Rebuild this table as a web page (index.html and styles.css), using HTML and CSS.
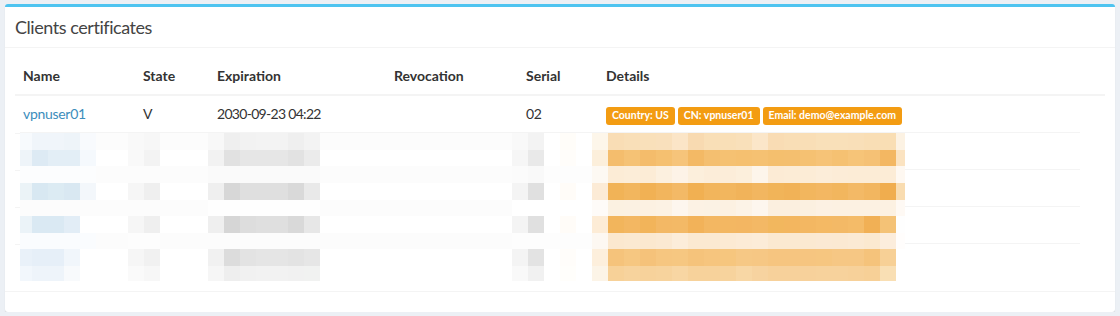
FILE: index.html
```html
<!DOCTYPE html>
<html lang="en">
<head>
<meta charset="utf-8">
<title>Clients certificates</title>
<link rel="stylesheet" href="styles.css">
</head>
<body>
<div class="box">
  <div class="box-header">
    <h3 class="box-title">Clients certificates</h3>
  </div>
  <div class="box-body">
    <div class="table-wrap">
      <table class="table">
        <thead>
          <tr>
            <th class="col-name">Name</th>
            <th class="col-state">State</th>
            <th class="col-exp">Expiration</th>
            <th class="col-rev">Revocation</th>
            <th class="col-serial">Serial</th>
            <th class="col-details">Details</th>
          </tr>
        </thead>
        <tbody>
          <tr>
            <td><a href="#" class="link">vpnuser01</a></td>
            <td>V</td>
            <td class="date">2030-09-23 04:22</td>
            <td></td>
            <td>02</td>
            <td>
              <div class="labels">
                <span class="label">Country: US</span>
                <span class="label">CN: vpnuser01</span>
                <span class="label">Email: demo@example.com</span>
              </div>
            </td>
          </tr>
          <tr class="hidden-row"><td>&nbsp;</td><td></td><td></td><td></td><td></td><td></td></tr>
          <tr class="hidden-row"><td>&nbsp;</td><td></td><td></td><td></td><td></td><td></td></tr>
          <tr class="hidden-row"><td>&nbsp;</td><td></td><td></td><td></td><td></td><td></td></tr>
          <tr class="hidden-row"><td>&nbsp;</td><td></td><td></td><td></td><td></td><td></td></tr>
        </tbody>
      </table>
      <canvas class="pixelate" id="pixelate" width="1085" height="149"></canvas>
    </div>
  </div>
  <div class="box-footer"></div>
</div>
<script src="script.js"></script>
</body>
</html>
```

FILE: styles.css
```css
* { box-sizing: border-box; }

html, body {
  margin: 0;
  padding: 0;
}

body {
  background: #ecf0f5;
  font-family: "Lato", "Noto Sans", sans-serif;
  font-size: 14px;
  line-height: 20px;
  color: #333;
  padding: 4px 5px 0 5px;
}

.box {
  background: #fff;
  border-top: 3px solid #4ec4f0;
  border-radius: 3px;
  box-shadow: 0 1px 1px rgba(0, 0, 0, 0.12);
}

.box-header {
  padding: 11px 10px 11px 10px;
  border-bottom: 1px solid #f4f4f4;
}

.box-title {
  margin: 0;
  font-size: 18px;
  line-height: 18px;
  font-weight: 400;
  color: #444;
  letter-spacing: -0.45px;
}

.box-body {
  padding: 10px;
}

.table-wrap {
  position: relative;
}

.table {
  width: 100%;
  border-collapse: collapse;
  border-spacing: 0;
}

.table th,
.table td {
  padding: 8px;
  text-align: left;
  vertical-align: top;
  line-height: 20px;
  height: 36px;
}

.table th {
  font-weight: 700;
  border-bottom: 2px solid #f4f4f4;
}

.table tbody td {
  border-top: 1px solid #f4f4f4;
  letter-spacing: -0.3px;
}

.table tbody td.date {
  letter-spacing: -0.7px;
}

.col-name { width: 120px; }
.col-state { width: 74px; }
.col-exp { width: 177px; }
.col-rev { width: 132px; }
.col-serial { width: 80px; }

.link {
  color: #3c8dbc;
  text-decoration: none;
}

.labels {
  display: flex;
  gap: 3px;
  padding-top: 3px;
}

.label {
  display: inline-block;
  background: #f39c12;
  color: #fff;
  font-weight: 700;
  font-size: 10.5px;
  line-height: 13px;
  letter-spacing: 0;
  padding: 2px 6px 3px 6px;
  border-radius: 3px;
  white-space: nowrap;
}

.pixelate {
  position: absolute;
  left: 5px;
  top: 74px;
  display: block;
}

.box-footer {
  border-top: 1px solid #f4f4f4;
  padding: 10px;
  height: 21px;
}
```

FILE: script.js
```js
(function () {
  var c = document.getElementById('pixelate');
  var ctx = c.getContext('2d');
  var ys = [1, 18, 34, 51, 68, 84, 101, 117, 134, 149];

  ctx.fillStyle = '#ffffff';
  ctx.fillRect(0, 0, c.width, c.height);

  // row separators that remain visible to the right of the pixelated area
  ctx.fillStyle = '#f4f4f4';
  ctx.fillRect(0, 0, 1060, 1);
  [37, 74, 111].forEach(function (y) { ctx.fillRect(885, y, 175, 1); });

  // faint wash on alternate block rows
  [0, 2, 4, 6].forEach(function (r) {
    ctx.fillStyle = '#fcfcfc';
    ctx.fillRect(0, ys[r], 572, ys[r + 1] - ys[r]);
  });

  function cell(k, r, col) {
    var x0 = 16 * k - 20, x1 = x0 + 16;
    if (x0 < 0) x0 = 0;
    if (x1 > 885) x1 = 885;
    if (x1 <= x0) return;
    ctx.fillStyle = '#' + col;
    ctx.fillRect(x0, ys[r], x1 - x0, ys[r + 1] - ys[r]);
  }

  var groups = [
    { k: 1, rows: [
      'f7fafd f0f5fa f0f5fa eef4f9 f8fafd',
      'eef4f9 ddeaf4 e3eef6 e3eef6 f5f9fd',
      'fcfdfe fcfdfe fcfdfe fcfdfe fcfdfe',
      'ebf3f7 d8e8f2 dcebf3 d9e8f2 f3f7fb',
      'fcfcfc fcfcfc fcfcfc fcfcfc fcfcfc',
      'ebf3f8 dae9f3 dae9f3 e2edf6 ffffff',
      'fafcfe fafcfe fafcfe fafcfe fafcfe',
      'e9f1f9 e6eff8 e6eff8 f1f6fb ffffff',
      'f2f7fc eef4fa eef4fa f8fafc ffffff'
    ]},
    { k: 8, rows: [
      'f9f9f9 f7f7f7', 'f9f9f9 f3f3f3', 'fcfcfc fcfcfc', 'f6f6f6 efefef', 'fcfcfc fcfcfc',
      'f6f6f6 efefef', 'fdfdfd fdfdfd', 'f6f6f6 f1f1f1', 'fafafa f7f7f7'
    ]},
    { k: 13, rows: [
      'f8f8f8 efefef f2f2f2 f3f3f3 f3f3f3 efefef f3f3f3',
      'f2f2f2 e1e1e1 e6e6e6 e6e6e6 e6e6e6 e2e2e2 ebebeb',
      'fafafa fafafa fafafa fafafa fafafa fafafa fafafa',
      'efefef d7d7d7 dfdfdf dfdfdf dfdfdf d9d9d9 e9e9e9',
      'fefefe fefefe fefefe fefefe fefefe fefefe fefefe',
      'efefef d6d6d6 dddddd dfdfdf dfdfdf d9d9d9 e7e7e7',
      'fcfcfc fcfcfc fcfcfc fcfcfc fcfcfc fcfcfc fcfcfc',
      'f1f1f1 dcdcdc e3e3e3 e5e5e5 e5e5e5 e3e3e3 e6e6e6',
      'f6f6f6 eeeeee f1f1f1 f2f2f2 f2f2f2 f1f1f1 f1f2f1'
    ]},
    { k: 32, rows: [
      'f9f9f9 f3f3f3 ffffff fffdf9 ffffff fdf6ea',
      'f6f6f6 e9e9e9 ffffff fffdfa ffffff fcefdb',
      'fbfbfb f9f9f9 fdfdfd fdfdfd fdfdfd fdf9f3',
      'f4f4f4 e0e0e0 ffffff fffcf8 ffffff fcebd6',
      'ffffff ffffff ffffff ffffff ffffff fefbf8',
      'f4f4f4 e0e0e0 ffffff fffcf8 ffffff fdecd6',
      'fdfdfd fdfdfd fdfdfd fdfdfd fdfdfd fdf8f2',
      'f4f4f4 e3e3e3 ffffff fffdfa ffffff fdefdc',
      'f9f9f9 f1f1f1 ffffff fffefb ffffff fcf4e7'
    ]},
    { k: 38, rows: [
      'f9ddb5 f9dfb8 f9e0ba f9e0bc fbe5c7 f8dab1 f9dfb7 f9dfb7 f9e0ba fbe6c9 f9dcb4 f9deb6 f9deb6 f9e0b9 f9e0b9 f9dfb8 f9deb5 f9deb4 fcf2e3',
      'f4bd6d f5c275 f4bc6b f5c070 f6c47a f3b965 f4bf70 f5c172 f5c070 f5c172 f4bf6e f4bf6f f5c172 f6c377 f5c172 f6c478 f5c175 f3b762 fbe3c1',
      'fcecd6 fcedd8 fcecd6 fcf0df fdf3e7 fcefdc fcedd9 fcedd9 fcefdc fdf5eb fcebd5 fcecd6 fcecd6 fcedd9 fcecd7 fcecd6 fcecd6 fcecd6 fef8f1',
      'f1b357 f2b65e f1b154 f2b55d f3b966 f1b052 f2b55c f2b65e f1b35a f2b660 f1b459 f1b257 f2b65e f3b762 f2b65e f3b966 f2b660 f0ad4e f9dcb0',
      'fbf1e1 fbf1e2 fcf1e2 fcf2e4 fdf6ee fcf2e4 fbf2e4 fcf1e2 fcf3e7 fdf6ee fbefdf fbefdf fbf0e0 fcf1e3 fcf1e2 fcf1e2 fcf1e2 fcf1e2 fef9f4',
      'f2b55c f3b762 f2b45a f3b865 f3b966 f2b259 f3b762 f3b762 f3b662 f3b865 f2b75e f3b65f f3b762 f4b964 f3b966 f4bb68 f1b055 f4c276 fefefe',
      'fbe8cf fbe9d1 fbe8cf fbe9d2 fcedda fbe9d1 fbe9d1 fcead3 fcebd6 fcecd8 fbe9d1 fbe9d1 fbe9d1 fbe9d3 fbe9d2 fbead4 fbe9d0 fceddc fffdfc',
      'f5c37b f6c781 f5c27a f6c680 f6c781 f5c37b f6c57e f6c67e f6c885 f6c784 f6c580 f6c580 f6c580 f6c680 f6c784 f6c784 f5c37b f7d096 ffffff',
      'f7d198 f7d39d f7d29b f7d39d f8d6a3 f7d29b f7d29b f7d39d f8d7a5 f7d3a0 f7d19b f7d19b f7d19b f7d29c f7d29c f7d19a f7d097 f9dfb4 ffffff'
    ]}
  ];

  groups.forEach(function (g) {
    g.rows.forEach(function (line, r) {
      line.split(' ').forEach(function (col, i) { cell(g.k + i, r, col); });
    });
  });
})();
```
